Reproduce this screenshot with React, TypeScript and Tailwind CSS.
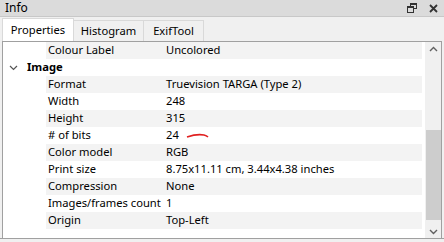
import React from "react";

type Row = { label: string; value: string; mark?: boolean };

const rows: Row[] = [
  { label: "Format", value: "Truevision TARGA (Type 2)" },
  { label: "Width", value: "248" },
  { label: "Height", value: "315" },
  { label: "# of bits", value: "24", mark: true },
  { label: "Color model", value: "RGB" },
  { label: "Print size", value: "8.75x11.11 cm, 3.44x4.38 inches" },
  { label: "Compression", value: "None" },
  { label: "Images/frames count", value: "1" },
  { label: "Origin", value: "Top-Left" },
];

const font = { fontFamily: '"Segoe UI", "Noto Sans", sans-serif' };

function PropRow({ label, value, mark, shaded }: Row & { shaded: boolean }) {
  return (
    <div className="flex h-[17px] items-center">
      <div className="w-[43px] shrink-0" />
      <div className={`flex h-full flex-1 items-center whitespace-nowrap ${shaded ? "bg-[#f3f3f3]" : "bg-white"}`}>
        <span className="w-[120px] shrink-0 pl-[2px]">{label}</span>
        <span className="flex items-center">
          {value}
          {mark ? (
            <svg width="24" height="6" viewBox="0 0 24 6" className="ml-[7px] mt-[1px]">
              <path d="M1 4 C 7 2, 13 1, 18 2 C 20 2.5, 21 3, 22 4" stroke="#e02020" strokeWidth="1.6" fill="none" />
            </svg>
          ) : null}
        </span>
      </div>
    </div>
  );
}

export default function App() {
  return (
    <div className="h-[242px] w-[444px] overflow-hidden bg-[#f0f0f0] text-[11.2px] text-black" style={font}>
      {/* title bar */}
      <div className="flex h-[17px] items-center justify-between border-b border-[#c8c8c8] bg-[#dbdbdb] pl-[5px] pr-[6px]">
        <span className="text-[12px] leading-none">Info</span>
        <div className="flex items-center gap-[12px]">
          <svg width="10" height="10" viewBox="0 0 10 10">
            <rect x="3.5" y="0.5" width="6" height="5" fill="none" stroke="#333" />
            <rect x="3.5" y="0.5" width="6" height="1.5" fill="#333" />
            <rect x="0.5" y="3.5" width="6" height="6" fill="#dbdbdb" stroke="#333" />
            <rect x="0.5" y="3.5" width="6" height="1.5" fill="#333" />
          </svg>
          <svg width="9" height="9" viewBox="0 0 9 9">
            <path d="M1 1 L8 8 M8 1 L1 8" stroke="#333" strokeWidth="1.8" />
          </svg>
        </div>
      </div>

      {/* tabs */}
      <div className="flex h-[24px] items-end pl-[2px]">
        <div className="flex h-[23px] w-[72px] items-center justify-center border border-b-0 border-[#d9d9d9] bg-white">
          Properties
        </div>
        <div className="flex h-[21px] w-[70px] items-center justify-center border-b-0 border-r border-t border-[#d9d9d9] bg-[#f0f0f0]">
          Histogram
        </div>
        <div className="flex h-[21px] w-[60px] items-center justify-center border-b-0 border-r border-t border-[#d9d9d9] bg-[#f0f0f0]">
          ExifTool
        </div>
      </div>

      {/* panel */}
      <div className="ml-[2px] mr-[2px] flex h-[197px] border border-b-0 border-[#a0a0a0] bg-white">
        <div className="flex-1 overflow-hidden pr-[3px]">
          <div className="flex h-[17px] items-center">
            <div className="w-[43px] shrink-0" />
            <div className="flex h-full flex-1 items-center bg-[#f3f3f3]">
              <span className="w-[120px] shrink-0 pl-[2px]">Colour Label</span>
              <span>Uncolored</span>
            </div>
          </div>
          <div className="flex h-[17px] items-center">
            <svg width="9" height="6" viewBox="0 0 9 6" className="ml-[6px] mr-[9px]">
              <path d="M1 1 L4.5 4.5 L8 1" stroke="#555" strokeWidth="1.2" fill="none" />
            </svg>
            <span className="font-bold">Image</span>
          </div>
          {rows.map((r, i) => (
            <PropRow key={r.label} {...r} shaded={i % 2 === 0} />
          ))}
        </div>

        {/* scrollbar */}
        <div className="flex w-[16px] flex-col bg-[#f0f0f0]">
          <div className="flex h-[17px] items-center justify-center">
            <svg width="9" height="6" viewBox="0 0 9 6">
              <path d="M1 5 L4.5 1.5 L8 5" stroke="#606060" strokeWidth="1.4" fill="none" />
            </svg>
          </div>
          <div className="flex-1 pt-[75px] pb-[5px]">
            <div className="mx-auto h-[90px] w-[15px] bg-[#cdcdcd]" />
          </div>
          <div className="flex h-[17px] items-center justify-center">
            <svg width="9" height="6" viewBox="0 0 9 6">
              <path d="M1 1 L4.5 4.5 L8 1" stroke="#606060" strokeWidth="1.4" fill="none" />
            </svg>
          </div>
        </div>
      </div>
      <div className="h-[4px] border-t border-[#a0a0a0] bg-[#f0f0f0]" />
    </div>
  );
}
